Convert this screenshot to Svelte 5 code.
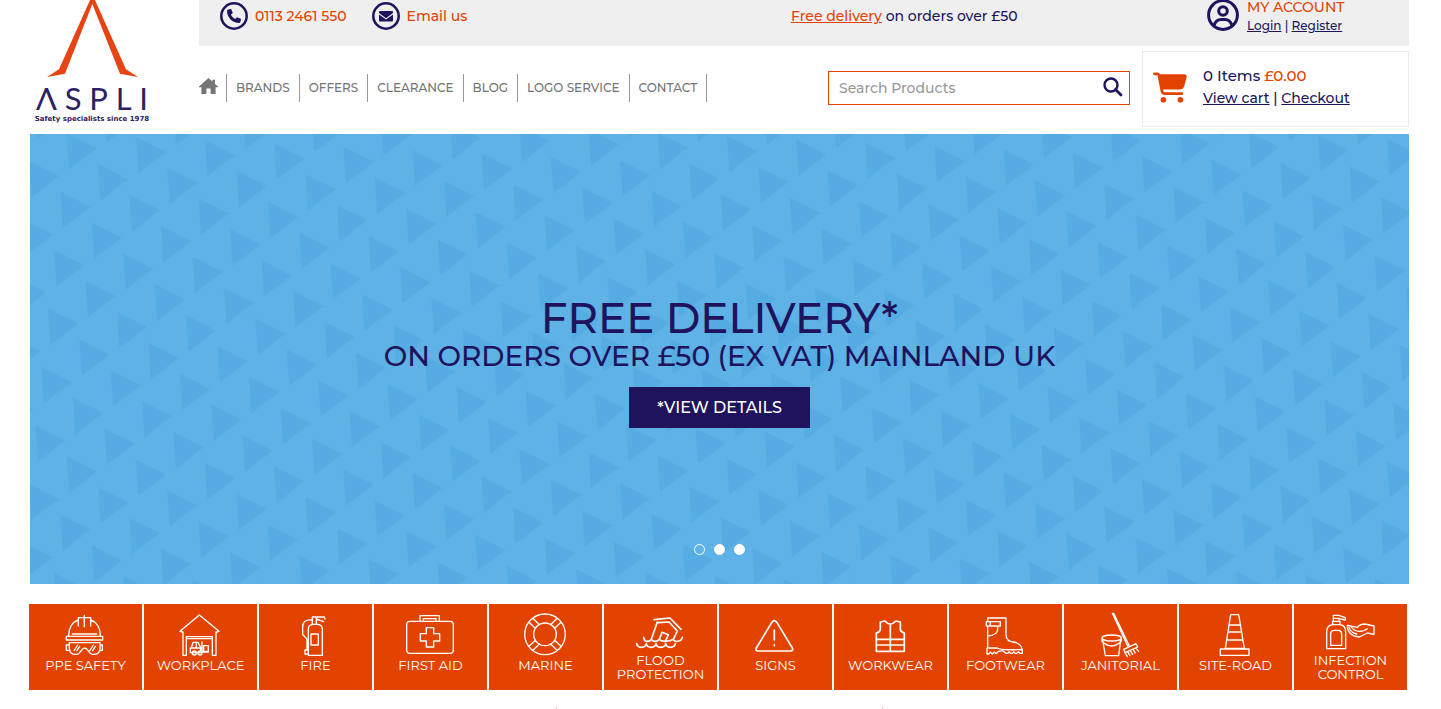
<script>
    const navLinks = ['BRANDS', 'OFFERS', 'CLEARANCE', 'BLOG', 'LOGO SERVICE', 'CONTACT'];
    const logoLetters = ['Λ', 'S', 'P', 'L', 'I'];

    let search = '';
    let activeSlide = 0;

    // Icons are drawn on a 183 wide grid, three units per pixel
    const categories = [
        {
            lines: ['PPE SAFETY'],
            icon: 'M34 73H143V84H34ZM41 71C41 48 52 30 70 24M107 24C125 30 136 48 136 71M70 42V17H107V42M88 10V44M52 66H125M43 92H135V108C135 120 128 127 118 127H112C102 127 100 108 89 108S76 127 66 127H60C50 127 43 120 43 108ZM43 99H34V115H44M135 99H142V115H134M58 115L68 99M66 116L74 103M105 115L115 99M113 116L121 103'
        },
        {
            lines: ['WORKPLACE'],
            icon: 'M30 58L88 9L147 58M34 54V60H39V130H49V74H127V130H138V60H143V54M53 80H123M64 108L69 91H84L93 108M61 108H92V122H61ZM79 92V108M67 123a6 6 0 1 0 12 0a6 6 0 1 0-12 0M84 123a6 6 0 1 0 12 0a6 6 0 1 0-12 0M96 90V120H116M101 101H115V118H101Z'
        },
        {
            lines: ['FIRE'],
            icon: 'M70 130V52Q70 38 84 37H98Q112 38 112 52V130ZM78 66H100V99H78ZM82 36V15H94V36M94 15H118L120 21M94 21L116 29M82 24C60 22 53 30 53 46V66C53 72 66 76 66 84V114M60 114H70V126H60Z'
        },
        {
            lines: ['FIRST AID'],
            icon: 'M30 28H150Q160 28 160 38V114Q160 124 150 124H30Q20 124 20 114V38Q20 28 30 28ZM60 28V11H118V28M70 28V20H108V28M79 47H101V65H119V87H101V105H79V87H61V65H79Z'
        },
        {
            lines: ['MARINE'],
            icon: 'M29 67a61 61 0 1 0 122 0a61 61 0 1 0-122 0M56 67a34 34 0 1 0 68 0a34 34 0 1 0-68 0M119 85L138 103M107 96L126 115M61 85L42 103M73 96L54 115M119 49L138 31M107 38L126 19M61 49L42 31M73 38L54 19'
        },
        {
            lines: ['FLOOD', 'PROTECTION'],
            bold: true,
            icon: 'M72 23L120 18L153 52M82 30L64 82Q62 88 52 88Q43 88 41 76M84 32L117 30L142 57L130 82Q130 88 140 88Q154 88 157 76M64 82Q66 88 76 88Q84 88 88 82L96 61L115 68L106 88M88 82Q92 88 106 88Q120 88 130 82M20 95q2 11 14 11 13 0 15-11 2 11 14 11 13 0 15-11 2 11 14 11 13 0 15-11 2 11 14 11 13 0 15-11'
        },
        {
            lines: ['SIGNS'],
            bold: true,
            icon: 'M80 32Q88 20 96 32L142 108Q146 117 136 117H40Q30 117 34 108ZM88 54V84M88 98V101'
        },
        {
            lines: ['WORKWEAR'],
            bold: true,
            icon: 'M61 30L75 27Q90 46 107 27L121 30V52Q122 60 133 63V118H49V63Q60 60 61 52ZM91 38V118M49 82H133M49 99H133'
        },
        {
            lines: ['FOOTWEAR'],
            icon: 'M34 29H76V42H34ZM38 29V18H93V70Q95 88 115 90Q142 94 142 118M46 29V42M38 42V108M68 42V52Q68 70 38 72M36 108H66Q80 116 142 112V124H134L130 119L126 124H120L116 119L112 124H106L102 119L98 124H92L84 116L70 118L64 125L58 120L52 126L46 120L42 126H36Z'
        },
        {
            lines: ['JANITORIAL'],
            icon: 'M67 4L114 104M71 4L118 102M101 112L138 95L143 105L105 122ZM105 122L112 134M113 119L120 131M121 116L128 127M129 112L136 123M137 108L146 118M36 78a29 9 0 1 0 58 0a29 9 0 1 0-58 0M38 84L46 131H86L92 84M36 80V88Q65 116 94 88V80'
        },
        {
            lines: ['SITE-ROAD'],
            icon: 'M77 8H101L118 109H61ZM46 111H132V130H46ZM73 39H106M69 60H110M65 84H114'
        },
        {
            lines: ['INFECTION', 'CONTROL'],
            icon: 'M20 110V60Q20 40 38 38H60Q77 40 77 60V110ZM32 100V66Q32 56 42 55H56Q65 56 65 66V100ZM38 38V28H60V38M40 28V10H56L76 17V24L57 20V28M40 19H57M82 40Q82 72 118 75L142 63L162 67V42L134 36Q120 36 112 46L82 40M87 46Q92 62 110 66M92 42Q100 56 116 58Q132 58 142 50'
        }
    ];
</script>

<div class="page">
    <header class="header">
        <a href="/" class="logo" aria-label="Aspli home">
            <svg class="logo-mark" width="91" height="78" viewBox="142 0 273 234">
                <path fill="#e64412" d="M273 -4L178 208L142 231L196 221L278 12L361 221L415 231L379 208L284 -4Z" />
            </svg>
            <span class="logo-name">
                {#each logoLetters as letter}
                    <span>{letter}</span>
                {/each}
            </span>
            <span class="logo-tagline">Safety specialists since 1978</span>
        </a>

        <div class="header-main">
            <div class="top-bar">
                <div class="contacts">
                    <a href="tel:01132461550">
                        <svg width="28" height="28" viewBox="0 0 28 28">
                            <circle cx="14" cy="14" r="12.7" fill="none" stroke="#20135d" stroke-width="2.5" />
                            <path fill="#20135d" transform="translate(7 7) scale(0.0273)" d="M164.9 24.6c-7.7-18.6-28-28.5-47.4-23.2l-88 24C12.1 30.2 0 46 0 64C0 311.4 200.6 512 448 512c18 0 33.8-12.1 38.6-29.5l24-88c5.3-19.4-4.6-39.7-23.2-47.4l-96-40c-16.3-6.8-35.2-2.1-46.3 11.6L304.7 368C234.3 334.7 177.3 277.7 144 207.3L193.3 167c13.7-11.2 18.4-30 11.6-46.3l-40-96z" />
                        </svg>
                        0113 2461 550
                    </a>
                    <a href="/contact">
                        <svg width="28" height="28" viewBox="0 0 28 28">
                            <circle cx="14" cy="14" r="12.7" fill="none" stroke="#20135d" stroke-width="2.5" />
                            <path fill="#20135d" d="M8 9h12q1 0 1 1v1l-7 5.2L7 11v-1q0-1 1-1zM7 12.4l7 5.2 7-5.2V18.5q0 1-1 1H8q-1 0-1-1z" />
                        </svg>
                        Email us
                    </a>
                </div>
                <p class="delivery"><a href="/delivery">Free delivery</a> on orders over £50</p>
                <div class="account">
                    <svg width="32" height="31" viewBox="0 1 32 31" fill="none" stroke="#20135d" stroke-width="3">
                        <circle cx="16" cy="16" r="14.4" />
                        <circle cx="16" cy="12" r="4.3" />
                        <path d="M7 26.5Q9 20.5 14 20.5H18Q23 20.5 25 26.5" />
                    </svg>
                    <div>
                        <p class="account-title">MY ACCOUNT</p>
                        <p class="account-links"><a href="/login">Login</a> | <a href="/register">Register</a></p>
                    </div>
                </div>
            </div>

            <div class="tools">
                <nav class="nav">
                    <a href="/" class="home" aria-label="Home">
                        <svg width="19" height="17" viewBox="0 0 19 17">
                            <path fill="#757575" d="M9.5 0L13.5 3.6V1.8H16V6L19 8.6V9.3H16.6V16H11.6V10.5H7.4V16H2.4V9.3H0V8.6Z" />
                        </svg>
                    </a>
                    {#each navLinks as link}
                        <a href="/">{link}</a>
                    {/each}
                </nav>

                <form class="search" on:submit|preventDefault>
                    <input type="text" placeholder="Search Products" aria-label="Search Products" bind:value={search} />
                    <button type="submit" aria-label="Search">
                        <svg width="20" height="20" viewBox="0 0 20 20" fill="none" stroke="#20135d">
                            <circle cx="8" cy="8" r="6.5" stroke-width="2.4" />
                            <path d="M12.5 12.5L18 18" stroke-width="2.8" stroke-linecap="round" />
                        </svg>
                    </button>
                </form>

                <div class="cart">
                    <svg width="34" height="31" viewBox="0 0 576 512">
                        <path fill="#e34300" d="M0 24C0 10.7 10.7 0 24 0H69.5c22 0 41.5 12.8 50.6 32h411c26.3 0 45.5 25 38.6 50.4l-41 152.3c-8.5 31.4-37 53.3-69.5 53.3H170.7l5.4 28.5c2.2 11.3 12.1 19.5 23.6 19.5H488c13.3 0 24 10.7 24 24s-10.7 24-24 24H199.7c-34.6 0-64.3-24.6-70.7-58.5L77.4 54.5c-.7-3.8-4-6.5-7.9-6.5H24C10.7 48 0 37.3 0 24zM128 464a48 48 0 1 1 96 0 48 48 0 1 1-96 0zm336-48a48 48 0 1 1 0 96 48 48 0 1 1 0-96z" />
                    </svg>
                    <div>
                        <p class="cart-total">0 Items <span class="price">£0.00</span></p>
                        <p><a href="/cart">View cart</a> | <a href="/checkout">Checkout</a></p>
                    </div>
                </div>
            </div>
        </div>
    </header>

    <section class="hero">
        <svg class="hero-pattern" width="100%" height="100%" aria-hidden="true">
            <defs>
                <pattern id="triangles" width="100" height="100" patternUnits="userSpaceOnUse" patternTransform="matrix(0.6917 0.0335 -0.063 0.584 36.7 -0.7)">
                    <path fill="#55ace2" d="M0 0L9 62.3L45.9 23.1ZM50 50L59 112.3L95.9 73.1ZM50 -50L59 12.3L95.9 -26.9Z" />
                </pattern>
            </defs>
            <rect width="100%" height="100%" fill="url(#triangles)" />
        </svg>
        <div class="hero-text">
            <h1>FREE DELIVERY*</h1>
            <h2>ON ORDERS OVER £50 (EX VAT) MAINLAND UK</h2>
            <a href="/delivery" class="hero-button">*VIEW DETAILS</a>
        </div>
        <div class="dots">
            {#each [0, 1, 2] as slide}
                <button
                    type="button"
                    class:active={slide === activeSlide}
                    aria-label="Slide {slide + 1}"
                    on:click={() => (activeSlide = slide)}
                ></button>
            {/each}
        </div>
    </section>

    <nav class="categories" aria-label="Categories">
        {#each categories as category}
            <a href="/">
                <svg
                    width="61"
                    height={category.lines.length > 1 ? 41 : 46}
                    viewBox="0 0 183 {category.lines.length > 1 ? 123 : 138}"
                    class:bold={category.bold}
                >
                    <path d={category.icon} />
                </svg>
                {#each category.lines as line}
                    <span>{line}</span>
                {/each}
            </a>
        {/each}
    </nav>

    <div class="features"></div>
</div>

<style>
    :global(body) {
        margin: 0;
        background: #fff;
    }

    .page {
        --navy: #20135d;
        --orange: #e34300;
        padding: 0 32px 0 30px;
        color: var(--navy);
        font-family: Montserrat, Inter, "Open Sans", sans-serif;
        font-size: 14px;
        font-weight: 500;
    }

    p, h1, h2 {
        margin: 0;
        font-weight: 500;
    }

    a {
        color: inherit;
    }

    svg {
        display: block;
        flex: none;
    }

    .header {
        display: flex;
        height: 134px;
    }

    .logo {
        display: flex;
        flex-direction: column;
        align-items: center;
        width: 112px;
        margin: 0 51px 0 6px;
        color: #2b2261;
        text-decoration: none;
    }

    .logo-name {
        display: flex;
        justify-content: space-between;
        width: 112px;
        margin-top: 4px;
        font-family: Lato, sans-serif;
        font-size: 31px;
        font-weight: 400;
        line-height: 32px;
    }

    .logo-tagline {
        font-family: "DejaVu Sans", sans-serif;
        font-size: 7px;
        font-weight: 700;
        line-height: 10px;
        white-space: nowrap;
    }

    .header-main {
        flex: 1;
    }

    .top-bar {
        display: grid;
        grid-template-columns: 592fr 416fr 202fr;
        height: 46px;
        background: #efefef;
        line-height: 32px;
    }

    .contacts {
        display: flex;
        gap: 25px;
        padding-left: 21px;
        color: var(--orange);
    }

    .contacts a {
        display: flex;
        align-items: center;
        gap: 7px;
        height: 32px;
        text-decoration: none;
    }

    .delivery a {
        color: var(--orange);
    }

    .account {
        display: flex;
        gap: 8px;
    }

    .account-title {
        color: var(--orange);
        line-height: 14px;
    }

    .account-links {
        font-size: 12px;
        line-height: 24px;
    }

    .tools {
        display: flex;
        align-items: flex-start;
        gap: 12px;
    }

    .nav {
        display: flex;
        flex: 1;
        margin-top: 28px;
        color: #757575;
        font-size: 12px;
        line-height: 28px;
    }

    .nav a {
        padding: 0 9px;
        border-right: 1px solid #999;
        text-decoration: none;
        white-space: nowrap;
    }

    .nav .home {
        padding: 4px 8px 0 0;
    }

    .search {
        display: flex;
        align-items: center;
        box-sizing: border-box;
        width: 302px;
        height: 34px;
        margin-top: 25px;
        border: 1px solid var(--orange);
    }

    .search input {
        flex: 1;
        min-width: 0;
        padding: 0 10px;
        border: 0;
        outline: none;
        background: none;
        color: var(--navy);
        font: inherit;
    }

    .search input::placeholder {
        color: #999;
        opacity: 1;
    }

    .search button {
        padding: 0 6px 2px;
        border: 0;
        background: none;
        cursor: pointer;
    }

    .cart {
        display: flex;
        gap: 16px;
        box-sizing: border-box;
        width: 267px;
        height: 76px;
        margin-top: 5px;
        padding: 13px 10px;
        border: 1px solid #ebebeb;
        line-height: 22px;
    }

    .cart svg {
        margin-top: 7px;
    }

    .cart-total {
        font-size: 15px;
    }

    .price {
        color: var(--orange);
    }

    .hero {
        position: relative;
        height: 450px;
        background: #5eb2e6;
    }

    .hero-pattern {
        position: absolute;
        inset: 0;
    }

    .hero-text {
        position: relative;
        display: flex;
        flex-direction: column;
        align-items: center;
        padding-top: 162px;
        text-align: center;
    }

    h1 {
        font-size: 42px;
        line-height: 44px;
    }

    h2 {
        font-size: 28px;
        line-height: 32px;
    }

    .hero-button {
        margin-top: 15px;
        padding: 0 28px;
        background: var(--navy);
        color: #fff;
        font-size: 16px;
        line-height: 41px;
        text-decoration: none;
    }

    .dots {
        position: absolute;
        right: 0;
        bottom: 29px;
        left: 0;
        display: flex;
        justify-content: center;
        gap: 9px;
    }

    .dots button {
        box-sizing: border-box;
        width: 11px;
        height: 11px;
        padding: 0;
        border: 1px solid #fff;
        border-radius: 50%;
        background: #fff;
        cursor: pointer;
    }

    .dots .active {
        background: none;
    }

    .categories {
        display: grid;
        grid-template-columns: repeat(12, minmax(0, 1fr));
        gap: 2px;
        margin: 20px 2px 0 -1px;
    }

    .categories a {
        display: flex;
        flex-direction: column;
        align-items: center;
        box-sizing: border-box;
        height: 86px;
        padding-top: 8px;
        background: var(--orange);
        color: #fff;
        font-size: 13px;
        font-weight: 400;
        line-height: 14px;
        text-decoration: none;
    }

    .categories path {
        fill: none;
        stroke: #fff;
        stroke-width: 4;
        stroke-linecap: round;
        stroke-linejoin: round;
    }

    .categories .bold path {
        stroke-width: 5;
    }

    /* Top edge of the dividers between the feature columns */
    .features {
        width: 325px;
        height: 2px;
        margin: 17px auto 0;
        border: solid #f3c3ad;
        border-width: 0 1px;
    }
</style>
